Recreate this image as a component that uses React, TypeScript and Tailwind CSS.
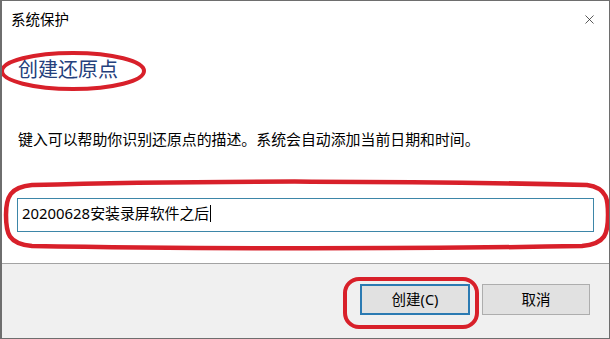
import { X } from "lucide-react";

const cjk = { fontFamily: '"Noto Sans CJK SC", "Noto Sans", sans-serif' };
const mixed = { fontFamily: '"Noto Sans", "Noto Sans CJK SC", sans-serif' };

function Annotations() {
  return (
    <svg
      className="pointer-events-none absolute left-0 top-0"
      width={610}
      height={339}
      viewBox="0 0 610 339"
      fill="none"
    >
      <ellipse cx={71} cy={70} rx={71} ry={18} stroke="#d8202a" strokeWidth={4} />
      <path
        d="M30 184 C 200 179, 420 180, 585 184 C 606 187, 606 200, 606 214 C 606 232, 604 243, 580 245 C 420 248, 200 248, 30 245 C 6 243, 4 232, 4 214 C 4 196, 8 186, 30 184 Z"
        stroke="#d8202a"
        strokeWidth={4.5}
      />
      <rect x={343} y={278} width={132} height={48} rx={14} stroke="#d8202a" strokeWidth={4} />
    </svg>
  );
}

export default function App() {
  return (
    <div
      className="relative flex h-[339px] w-[610px] flex-col overflow-hidden border border-l-2 border-[#6e6e6e] bg-white text-black"
      style={cjk}
    >
      <div className="flex h-[37px] shrink-0 items-center justify-between pl-[9px] pr-[12px]">
        <span className="text-[14.5px] leading-none">系统保护</span>
        <X className="h-[15px] w-[15px] text-[#222]" strokeWidth={1.2} />
      </div>

      <div className="flex flex-1 flex-col px-[14px]">
        <h1 className="mt-[18px] pl-[2px] text-[20px] leading-[26px] text-[#24407c]">创建还原点</h1>
        <p className="mt-[47px] pl-[2px] text-[14.9px] leading-[20px]">
          键入可以帮助你识别还原点的描述。系统会自动添加当前日期和时间。
        </p>
        <div
          className="ml-[1px] mt-[49px] flex h-[34px] w-[577px] items-center border border-[#3d86a8] pb-[4px] pl-[4px] text-[14.9px] leading-none"
          style={mixed}
        >
          <span>20200628安装录屏软件之后</span>
          <span className="ml-[1px] h-[17px] w-px bg-black" />
        </div>
      </div>

      <div
        className="flex h-[75px] shrink-0 items-start justify-end gap-[12px] border-t border-[#a3a3a3] bg-[#f0f0f0] pr-[19px] pt-[20px]"
        style={mixed}
      >
        <button className="flex h-[31px] w-[110px] items-center justify-center border-2 border-[#2b7ab2] bg-[#e1e1e1] text-[14.5px] leading-none">
          创建(C)
        </button>
        <button className="flex h-[31px] w-[108px] items-center justify-center border border-[#adadad] bg-[#e1e1e1] text-[14.5px] leading-none">
          取消
        </button>
      </div>

      <Annotations />
    </div>
  );
}
